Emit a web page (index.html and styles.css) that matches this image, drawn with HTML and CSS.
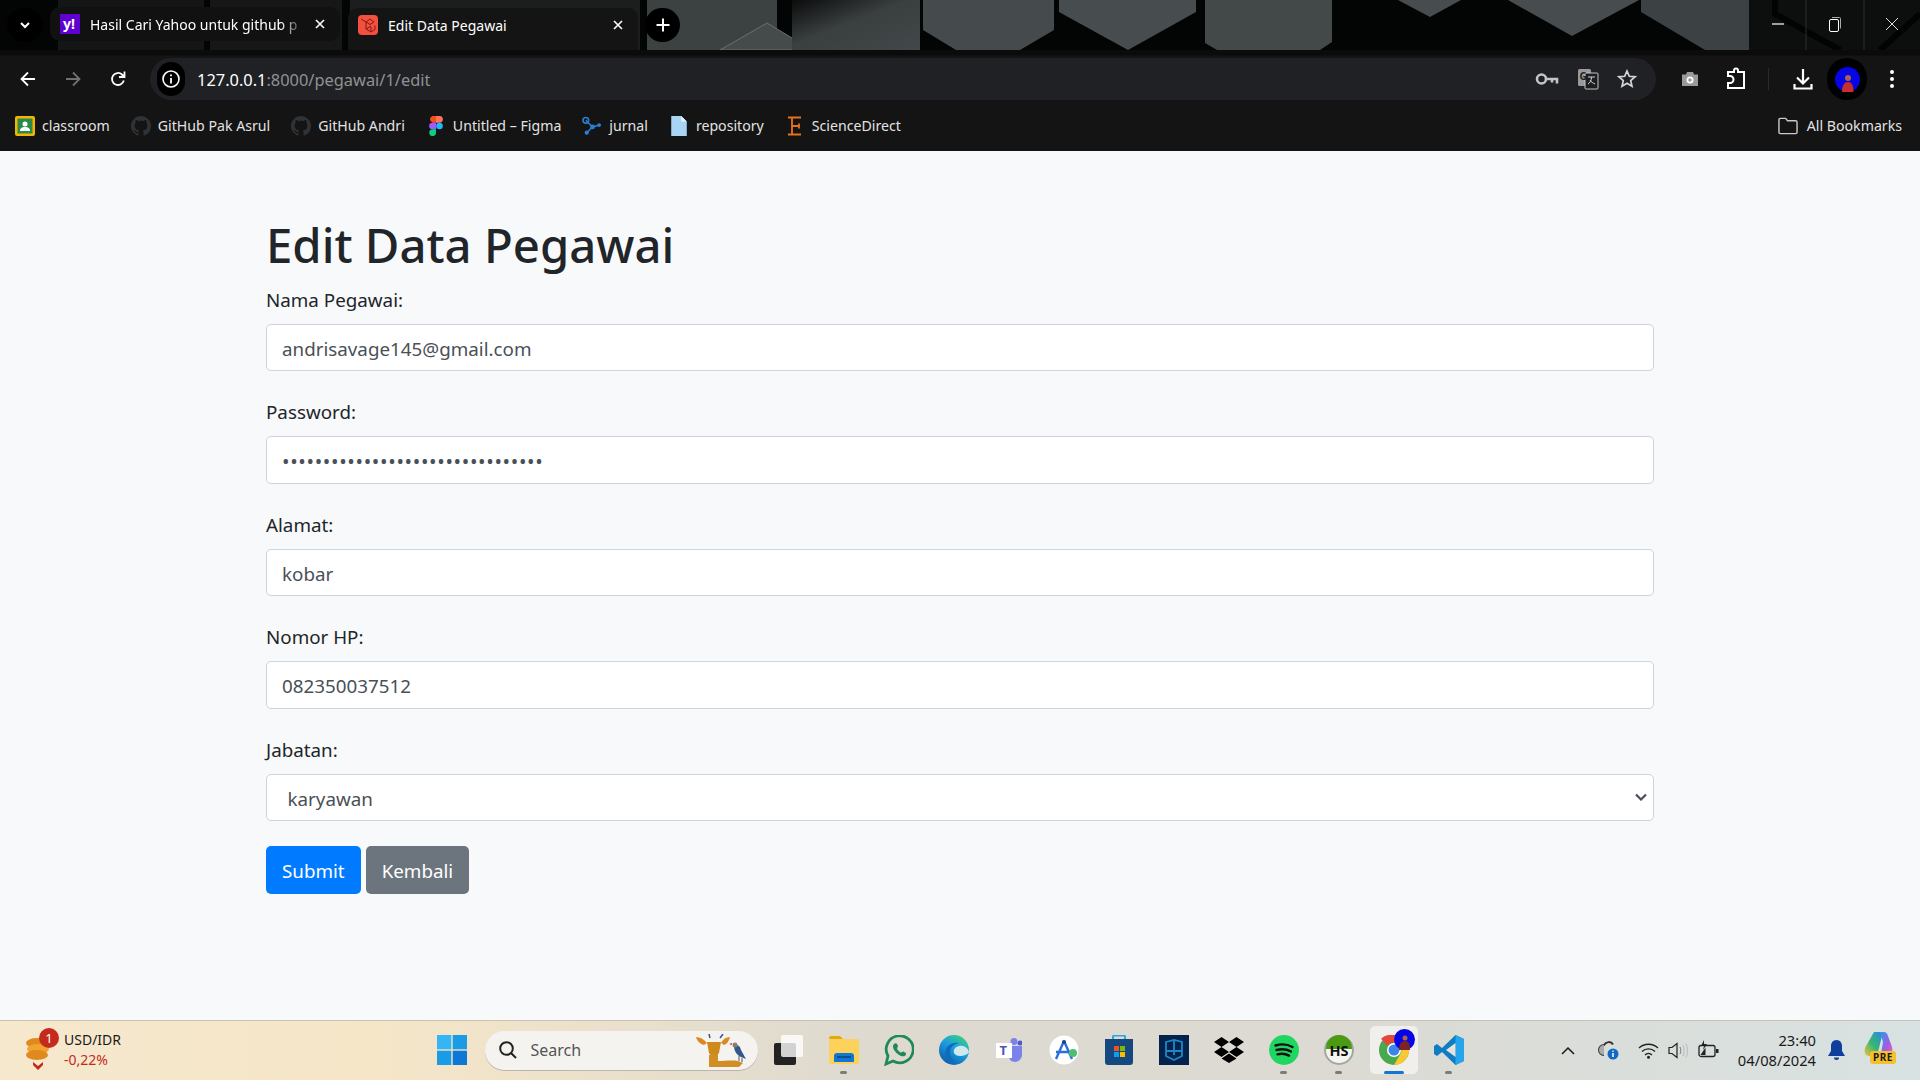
FILE: index.html
```html
<!DOCTYPE html>
<html lang="id">
<head>
    <meta charset="UTF-8">
    <title>Edit Data Pegawai</title>
    <link rel="stylesheet" href="styles.css">
</head>
<body>
    <header class="browser">
        <div class="tabstrip">
            <svg class="wallpaper" width="1920" height="50" viewBox="0 0 1920 50">
                <defs>
                    <linearGradient id="hexB" x1="0" y1="0" x2="1" y2="1">
                        <stop offset="0" stop-color="#0b0c0c"/>
                        <stop offset="0.45" stop-color="#3a3f40"/>
                        <stop offset="1" stop-color="#424849"/>
                    </linearGradient>
                </defs>
                <rect width="1920" height="50" fill="#030404"/>
                <polygon points="58,0 204,0 204,50 58,50" fill="#141515"/>
                <polygon points="210,0 342,0 342,50 210,50" fill="#161717"/>
                <polygon points="350,0 640,0 640,50 350,50" fill="#1c1d1d"/>
                <polygon points="647,0 777,0 777,50 647,50" fill="#3c4142"/>
                <polygon points="767,23 812,50 720,50" fill="#454a4a" stroke="#6a6f6f" stroke-width="1"/>
                <polygon points="792,0 920,0 920,50 792,50" fill="url(#hexB)"/>
                <polygon points="923,0 1054,0 1054,30 1020,50 956,50 923,30" fill="#454b4c"/>
                <polygon points="1059,0 1196,0 1196,12 1128,50 1059,12" fill="#474d4e"/>
                <polygon points="1205,0 1332,0 1332,42 1320,50 1217,50 1205,43" fill="#434949"/>
                <polygon points="1398,0 1461,0 1430,17" fill="#474d4e"/>
                <polygon points="1508,0 1639,0 1572,36" fill="#474d4e"/>
                <polygon points="1641,0 1749,0 1749,50 1705,50 1641,12" fill="#3c4243"/>
                <rect x="1749" width="171" height="50" fill="#0c0f0e"/>
                <polyline points="1775,0 1775,14 1840,50" fill="none" stroke="#020303" stroke-width="6"/>
                <polyline points="1920,14 1880,50" fill="none" stroke="#020303" stroke-width="6"/>
                <line x1="1806" y1="0" x2="1806" y2="50" stroke="#2a2e2d"/>
                <line x1="1864" y1="0" x2="1864" y2="50" stroke="#2a2e2d"/>
            </svg>
            <button class="tab-search">
                <svg width="14" height="14" viewBox="0 0 14 14"><path d="M3 5l4 4 4-4" fill="none" stroke="#fff" stroke-width="2"/></svg>
            </button>
            <div class="tab">
                <svg class="favicon" width="20" height="20" viewBox="0 0 20 20">
                    <rect width="20" height="20" fill="#5f01d1"/>
                    <text x="3" y="15" class="yahoo-mark">y!</text>
                </svg>
                <span class="tab-title tab-title-fade">Hasil Cari Yahoo untuk github p</span>
                <svg class="tab-close" width="12" height="12" viewBox="0 0 12 12"><path d="M2 2l8 8M10 2l-8 8" stroke="#fff" stroke-width="1.6"/></svg>
            </div>
            <div class="tab tab-active">
                <svg class="favicon" width="20" height="20" viewBox="0 0 20 20">
                    <rect width="20" height="20" rx="4" fill="#f4503f"/>
                    <path d="M3 4l5 3v7l5 3 4-2.500v-4M8 14l5-3M13 17v-5M8 7l4-3 4 3-4 2.500z" fill="none" stroke="#7d1c12" stroke-width="1"/>
                </svg>
                <span class="tab-title">Edit Data Pegawai</span>
                <svg class="tab-close" width="12" height="12" viewBox="0 0 12 12"><path d="M2 2l8 8M10 2l-8 8" stroke="#fff" stroke-width="1.6"/></svg>
            </div>
            <button class="tab-new">
                <svg width="16" height="16" viewBox="0 0 16 16"><path d="M8 1.500v13M1.500 8h13" stroke="#fff" stroke-width="2"/></svg>
            </button>
            <div class="window-controls">
                <span class="win-btn"><svg width="14" height="14" viewBox="0 0 14 14"><path d="M1 7h12" stroke="#fff" stroke-width="1.200"/></svg></span>
                <span class="win-btn"><svg width="14" height="16" viewBox="0 0 14 16"><rect x="1.500" y="3.500" width="9" height="12" rx="1.500" fill="none" stroke="#fff"/><path d="M4 1.500h7.500a1 1 0 0 1 1 1v10" fill="none" stroke="#aaa"/></svg></span>
                <span class="win-btn"><svg width="14" height="14" viewBox="0 0 14 14"><path d="M1 1l12 12M13 1L1 13" stroke="#ddd" stroke-width="1"/></svg></span>
            </div>
        </div>

        <div class="toolbar">
            <div class="nav-buttons">
                <svg width="18" height="18" viewBox="0 0 18 18"><path d="M16 9H3M9 2.500L2.500 9 9 15.500" fill="none" stroke="#fff" stroke-width="1.800"/></svg>
                <svg width="18" height="18" viewBox="0 0 18 18"><path d="M2 9h13M9 2.500L15.500 9 9 15.500" fill="none" stroke="#707070" stroke-width="1.800"/></svg>
                <svg width="18" height="18" viewBox="0 0 18 18"><path d="M14.800 10.500A6 6 0 1 1 13 4.500L15 6.500M15.500 1.500v5.500h-5.500" fill="none" stroke="#fff" stroke-width="1.800"/></svg>
            </div>
            <div class="omnibox">
                <span class="site-info">
                    <svg width="20" height="20" viewBox="0 0 20 20"><circle cx="10" cy="10" r="8" fill="none" stroke="#fff" stroke-width="1.600"/><path d="M10 9v5.500M10 5.500v1.800" stroke="#fff" stroke-width="1.800"/></svg>
                </span>
                <span class="url"><b>127.0.0.1</b>:8000/pegawai/1/edit</span>
                <span class="omni-icons">
                    <svg width="24" height="16" viewBox="0 0 24 16"><circle cx="6.500" cy="8" r="4.500" fill="none" stroke="#c4c4c4" stroke-width="2.600"/><path d="M11 8h11v4.500M17 8v3.500" fill="none" stroke="#c4c4c4" stroke-width="2.600"/></svg>
                    <svg width="22" height="22" viewBox="0 0 22 22"><rect x="1" y="1" width="13" height="17" rx="1.500" fill="#9a9a9a"/><rect x="8" y="5" width="13" height="16" rx="1" fill="#1d1e20" stroke="#c4c4c4"/><text x="2.500" y="12" class="translate-g">G</text><path d="M11 9h7M14.500 9c0 4-2 6-3.500 7M13 12c1 2 3 3 5 4" fill="none" stroke="#d5d5d5"/></svg>
                    <svg width="20" height="20" viewBox="0 0 20 20"><path d="M10 2l2.300 5.300 5.700.5-4.300 3.800 1.300 5.600L10 14.300 5 17.200l1.300-5.600L2 7.800l5.700-.5z" fill="none" stroke="#d6d6d6" stroke-width="1.700"/></svg>
                </span>
            </div>
            <div class="toolbar-actions">
                <svg class="act-camera" width="20" height="20" viewBox="0 0 20 20"><path d="M2 5.500h4L7 3h6l1 2.500h4V17H2z" fill="#9a9a9a"/><circle cx="10" cy="11" r="3.500" fill="#fff"/><circle cx="10" cy="11" r="1.800" fill="#9a9a9a"/></svg>
                <svg class="act-ext" width="22" height="24" viewBox="0 0 22 24"><path d="M3 5h6V3.500a2 2 0 0 1 4 0V5h6v16H3v-5h2a3.500 3.500 0 0 0 0-7H3z" fill="none" stroke="#fff" stroke-width="2"/></svg>
                <i class="act-divider"></i>
                <svg class="act-download" width="22" height="24" viewBox="0 0 22 24"><path d="M11 2v14M5 10.500l6 6 6-6M2.500 17v4.500h17V17" fill="none" stroke="#fff" stroke-width="2.200"/></svg>
                <span class="avatar-pill">
                    <svg width="25" height="25" viewBox="0 0 25 25"><circle cx="12.500" cy="12.500" r="12.500" fill="#0505e6"/><circle cx="13" cy="11" r="3" fill="#a8634a"/><path d="M7 25c0-7 2.500-10 6-10s5.500 3 5.500 10z" fill="#c62f2c"/></svg>
                </span>
                <svg width="6" height="20" viewBox="0 0 6 20"><circle cx="3" cy="3" r="2" fill="#fff"/><circle cx="3" cy="10" r="2" fill="#fff"/><circle cx="3" cy="17" r="2" fill="#fff"/></svg>
            </div>
        </div>

        <nav class="bookmarks">
            <a class="bookmark">
                <svg viewBox="0 0 20 20"><rect width="20" height="20" rx="2" fill="#f4b400"/><rect x="2.500" y="2.500" width="15" height="15" fill="#2a8a4a"/><circle cx="10" cy="8" r="2.500" fill="#fff"/><path d="M5 15c0-3 2-4 5-4s5 1 5 4z" fill="#fff"/></svg>
                classroom
            </a>
            <a class="bookmark">
                <svg viewBox="0 0 16 16"><path fill="#2f3237" d="M8 0C3.580 0 0 3.580 0 8c0 3.540 2.290 6.530 5.470 7.590.4.070.55-.17.55-.38 0-.19-.01-.82-.01-1.490-2.010.37-2.530-.49-2.690-.94-.09-.23-.48-.94-.82-1.130-.28-.15-.68-.52-.01-.53.63-.01 1.080.58 1.230.82.72 1.210 1.870.87 2.330.66.07-.52.28-.87.51-1.070-1.780-.2-3.640-.89-3.640-3.950 0-.87.31-1.590.82-2.150-.08-.2-.36-1.020.08-2.120 0 0 .67-.21 2.200.82.64-.18 1.320-.27 2-.27.68 0 1.360.09 2 .27 1.530-1.040 2.200-.82 2.200-.82.44 1.100.16 1.920.08 2.120.51.56.82 1.270.82 2.150 0 3.070-1.870 3.750-3.650 3.950.29.25.54.73.54 1.480 0 1.070-.01 1.930-.01 2.200 0 .21.15.46.55.38A8.013 8.013 0 0016 8c0-4.420-3.580-8-8-8z"/></svg>
                GitHub Pak Asrul
            </a>
            <a class="bookmark">
                <svg viewBox="0 0 16 16"><path fill="#2f3237" d="M8 0C3.580 0 0 3.580 0 8c0 3.540 2.290 6.530 5.470 7.590.4.070.55-.17.55-.38 0-.19-.01-.82-.01-1.490-2.010.37-2.530-.49-2.690-.94-.09-.23-.48-.94-.82-1.130-.28-.15-.68-.52-.01-.53.63-.01 1.080.58 1.230.82.72 1.210 1.870.87 2.330.66.07-.52.28-.87.51-1.070-1.780-.2-3.640-.89-3.640-3.950 0-.87.31-1.590.82-2.150-.08-.2-.36-1.020.08-2.120 0 0 .67-.21 2.200.82.64-.18 1.320-.27 2-.27.68 0 1.360.09 2 .27 1.530-1.040 2.200-.82 2.200-.82.44 1.100.16 1.920.08 2.120.51.56.82 1.270.82 2.150 0 3.070-1.870 3.750-3.650 3.950.29.25.54.73.54 1.480 0 1.070-.01 1.930-.01 2.200 0 .21.15.46.55.38A8.013 8.013 0 0016 8c0-4.420-3.580-8-8-8z"/></svg>
                GitHub Andri
            </a>
            <a class="bookmark">
                <svg viewBox="0 0 14 20"><path d="M7 0H3.500a3.500 3.500 0 0 0 0 6.700H7z" fill="#f24e1e"/><path d="M7 0h3.500a3.300 3.300 0 0 1 0 6.700H7z" fill="#ff7262"/><path d="M7 6.700H3.500a3.300 3.300 0 0 0 0 6.600H7z" fill="#a259ff"/><circle cx="10.500" cy="10" r="3.300" fill="#1abcfe"/><path d="M3.500 13.300H7V17a3.400 3.400 0 1 1-3.500-3.700z" fill="#0acf83"/></svg>
                Untitled – Figma
            </a>
            <a class="bookmark">
                <svg viewBox="0 0 21 20"><path d="M4 4l7 7M11 11l7-2M11 11l-6 6" stroke="#2d7fd6" stroke-width="1.600"/><circle cx="4" cy="4" r="3" fill="none" stroke="#2d7fd6" stroke-width="1.600"/><circle cx="11" cy="11" r="2.500" fill="#2d7fd6"/><circle cx="18" cy="9" r="2" fill="#2d7fd6"/><circle cx="5" cy="17" r="2.200" fill="#2d7fd6"/></svg>
                jurnal
            </a>
            <a class="bookmark">
                <svg viewBox="0 0 14 18"><path d="M0 0h9l5 5v13H0z" fill="#a8d4f5"/><path d="M9 0l5 5H9z" fill="#e3f2fd"/></svg>
                repository
            </a>
            <a class="bookmark">
                <svg viewBox="0 0 16 20"><path d="M1 1.500h13M1 18.500h13M5 1.500v17M5 10h7M12 7.500v5" fill="none" stroke="#e9711c" stroke-width="1.800"/></svg>
                ScienceDirect
            </a>
            <a class="bookmark all-bookmarks">
                <svg viewBox="0 0 21 18"><path d="M1 2.500a1.500 1.500 0 0 1 1.500-1.500H8l2 2.500h8.500A1.500 1.500 0 0 1 20 5v10.500a1.500 1.500 0 0 1-1.500 1.500h-16A1.500 1.500 0 0 1 1 15.500z" fill="none" stroke="#c8c8c8" stroke-width="1.500"/></svg>
                All Bookmarks
            </a>
        </nav>
    </header>

    <main class="content">
        <h1>Edit Data Pegawai</h1>
        <form>
            <div class="form-group">
                <label for="nama">Nama Pegawai:</label>
                <input id="nama" class="form-control" type="text" value="andrisavage145@gmail.com">
            </div>
            <div class="form-group">
                <label for="password">Password:</label>
                <input id="password" class="form-control form-password" type="password" value="12345678901234567890123456789012">
            </div>
            <div class="form-group">
                <label for="alamat">Alamat:</label>
                <input id="alamat" class="form-control" type="text" value="kobar">
            </div>
            <div class="form-group">
                <label for="hp">Nomor HP:</label>
                <input id="hp" class="form-control" type="text" value="082350037512">
            </div>
            <div class="form-group">
                <label for="jabatan">Jabatan:</label>
                <select id="jabatan" class="form-control form-select">
                    <option>karyawan</option>
                </select>
            </div>
            <div class="form-actions">
                <button type="button" class="btn btn-primary">Submit</button>
                <button type="button" class="btn btn-secondary">Kembali</button>
            </div>
        </form>
    </main>

    <footer class="taskbar">
        <div class="widget">
            <span class="widget-icon">
                <svg width="34" height="44" viewBox="0 0 34 44">
                    <ellipse cx="13" cy="15" rx="11" ry="5" fill="#e08a1e"/>
                    <ellipse cx="14" cy="21" rx="11" ry="5" fill="#f0a32f"/>
                    <ellipse cx="13" cy="27" rx="11" ry="5" fill="#e08a1e"/>
                    <path d="M9 34l5 4 5-4v3l-5 5-5-5z" fill="#c42b1c"/>
                </svg>
                <b class="widget-badge">1</b>
            </span>
            <span class="widget-text">
                <span>USD/IDR</span>
                <span class="widget-change">-0,22%</span>
            </span>
        </div>

        <div class="task-icons">
            <div class="tile">
                <svg width="30" height="30" viewBox="0 0 30 30"><rect width="14.300" height="14.300" fill="#35b5f3"/><rect x="15.700" width="14.300" height="14.300" fill="#1a9be6"/><rect y="15.700" width="14.300" height="14.300" fill="#1a9be6"/><rect x="15.700" y="15.700" width="14.300" height="14.300" fill="#0a78d4"/></svg>
            </div>
            <div class="search-box">
                <svg width="20" height="20" viewBox="0 0 20 20"><circle cx="8.500" cy="8.500" r="6.300" fill="none" stroke="#222" stroke-width="2"/><path d="M13 13l5 5" stroke="#222" stroke-width="2"/></svg>
                <span class="search-label">Search</span>
                <svg class="search-art" width="52" height="33" viewBox="0 0 52 33">
                    <path d="M14 4l-1-4M24 4l3-4" stroke="#34568b" stroke-width="1.500"/>
                    <path d="M0 3c4 0 8 2 11 6l-3 2C4 10 1 7 0 3zM34 3c-4 0-7 2-9 6l3 2c3-1 5-4 6-8z" fill="#d98b22"/>
                    <path d="M11 8h14l-2 11-3 4h-4l-3-4z" fill="#cf8a1d"/>
                    <path d="M13 21h9v6c6 0 14-1 20 0l5 2-4 4H13z" fill="#d08e24"/>
                    <path d="M38 12c4-2 6 0 7 4l5 9-5-2c-4-2-7-6-7-11z" fill="#34568b"/>
                    <circle cx="39" cy="11" r="2.500" fill="#8a7f6c"/>
                    <path d="M36 11l-3-1 3-1z" fill="#d33"/>
                    <path d="M43 22v5M46 24v4" stroke="#555"/>
                </svg>
            </div>
            <div class="tile tile-taskview">
                <svg width="30" height="30" viewBox="0 0 30 30"><rect y="8" width="22" height="22" rx="2" fill="#222"/><rect x="7" width="22" height="22" rx="2" fill="#fff" opacity="0.8"/></svg>
            </div>
            <div class="tile is-running">
                <svg width="30" height="28" viewBox="0 0 30 28"><path d="M0 2a2 2 0 0 1 2-2h9l3 3H0z" fill="#e8a80c"/><rect y="3" width="30" height="25" rx="2" fill="#fcd25c"/><path d="M5 26v-6a3 3 0 0 1 3-3h14a3 3 0 0 1 3 3v6z" fill="#0f78d4"/><rect x="8" y="20" width="14" height="2" fill="#0a4f95"/></svg>
            </div>
            <div class="tile">
                <svg width="30" height="31" viewBox="0 0 30 31"><path d="M2 29l2-8a13.500 13.500 0 1 1 5 5z" fill="none" stroke="#1e8a5a" stroke-width="2.800"/><path d="M10 9c1-1 2.500-1 3 0l1 2c.3.800-1 1.500-1 2.500.8 2 2.500 3.500 4 4 1 0 1.500-1.200 2.300-1l2.200 1.200c.8.500.8 1.800-.2 2.800-1.500 1.500-4 1-7-1-3-2.200-5-5-5.300-7.500-.1-1.200.3-2.200 1-3z" fill="#1e8a5a"/></svg>
            </div>
            <div class="tile">
                <svg width="30" height="30" viewBox="0 0 30 30">
                    <defs>
                        <linearGradient id="edgeGrad" x1="0.8" y1="0" x2="0.2" y2="1"><stop offset="0" stop-color="#3bd17c"/><stop offset="0.45" stop-color="#1b9de2"/><stop offset="1" stop-color="#0c59a4"/></linearGradient>
                    </defs>
                    <circle cx="15" cy="15" r="15" fill="url(#edgeGrad)"/>
                    <path d="M30 17c-1-4-5-7-10-6-4 .8-6 4-5 7 1 2 3 3 6 3 3 0 7-1 8-3-1 1-2 3-4 5l5-6z" fill="#cfe8ee"/>
                    <path d="M7 23C4 13 11 6 20 8c-5 1-9 4-9 10 0 3 2 7 6 9-4 0-8-1-10-4z" fill="#0f6cbd"/>
                </svg>
            </div>
            <div class="tile">
                <svg width="26" height="24" viewBox="0 0 26 24"><circle cx="18" cy="3.500" r="3.500" fill="#7b83eb"/><circle cx="24" cy="5" r="2.500" fill="#5059c9"/><path d="M13 8h13v9c0 3-3 7-7 7s-6-3-6-6z" fill="#7b83eb"/><rect y="5" width="16" height="15" fill="#fff"/><text x="3.500" y="17" class="teams-t">T</text></svg>
            </div>
            <div class="tile">
                <svg width="30" height="30" viewBox="0 0 30 30"><circle cx="15" cy="15" r="14.500" fill="#fff"/><path d="M15 6L7 24M15 6l8 18M7 17h16" fill="none" stroke="#2a6fe0" stroke-width="2.400"/><circle cx="15" cy="7" r="2" fill="#1c3f94"/><circle cx="24" cy="18" r="4" fill="#4cc070"/></svg>
            </div>
            <div class="tile">
                <svg width="28" height="30" viewBox="0 0 28 30"><path d="M8 5V2a1.500 1.500 0 0 1 1.500-1.500h9A1.500 1.500 0 0 1 20 2v3" fill="none" stroke="#29a8e0" stroke-width="2"/><path d="M0 4h28v23a3 3 0 0 1-3 3H3a3 3 0 0 1-3-3z" fill="#15487f"/><rect x="9" y="11" width="5" height="5" fill="#f25022"/><rect x="15" y="11" width="5" height="5" fill="#7fba00"/><rect x="9" y="17" width="5" height="5" fill="#00a4ef"/><rect x="15" y="17" width="5" height="5" fill="#ffb900"/></svg>
            </div>
            <div class="tile">
                <svg width="30" height="30" viewBox="0 0 30 30"><rect width="30" height="30" fill="#03224c"/><path d="M7 7l8-2 8 2v14l-8 4-8-4zM15 5v15M7 16h16" fill="none" stroke="#1e88c7" stroke-width="1.800"/></svg>
            </div>
            <div class="tile">
                <svg width="30" height="26" viewBox="0 0 30 26"><path d="M7.500 0L15 5 7.500 10 0 5zM22.500 0L30 5l-7.500 5L15 5zM7.500 10L15 15l-7.500 5L0 15zM22.500 10L30 15l-7.500 5L15 15zM15 16.500l7.500 5L15 26l-7.500-4.500z" fill="#000"/></svg>
            </div>
            <div class="tile is-running">
                <svg width="30" height="30" viewBox="0 0 30 30"><circle cx="15" cy="15" r="15" fill="#1ed760"/><path d="M6.500 10.500c6-1.800 12-1.300 17 1.500M7.500 15c5-1.400 10-1 14.500 1.500M8.500 19.300c4-1 8-.7 11.500 1.300" fill="none" stroke="#111" stroke-width="2.400" stroke-linecap="round"/></svg>
            </div>
            <div class="tile is-running">
                <svg width="30" height="30" viewBox="0 0 30 30"><circle cx="15" cy="15" r="14" fill="#f4f4f0" stroke="#a3a89e" stroke-width="2"/><path d="M2 13a13 13 0 0 1 26 0v1H2z" fill="#4a9a12"/><text x="15" y="20.500" text-anchor="middle" class="hs-mark">HS</text></svg>
            </div>
            <div class="tile tile-active">
                <svg class="chrome-logo" width="30" height="30" viewBox="0 0 30 30"><circle cx="15" cy="15" r="15" fill="#4aa84e"/><path d="M15 0a15 15 0 0 1 13 7.500H15A7.500 7.500 0 0 0 8.500 11L2 3.800A15 15 0 0 1 15 0z" fill="#e5483a"/><path d="M28 7.500A15 15 0 0 1 15 30l6.500-11.300A7.500 7.500 0 0 0 22.500 15c0-2.800-1.500-5.800-3.500-7.500z" fill="#f8c934"/><circle cx="15" cy="15" r="7" fill="#fff"/><circle cx="15" cy="15" r="5.500" fill="#3a84ea"/></svg>
                <svg class="chrome-avatar" width="21" height="21" viewBox="0 0 21 21"><circle cx="10.500" cy="10.500" r="10.500" fill="#0505e6"/><circle cx="11" cy="9" r="2.500" fill="#a8634a"/><path d="M5 21c0-6 2-9 6-9s5 3 5 9z" fill="#7b2326"/></svg>
            </div>
            <div class="tile is-running">
                <svg width="30" height="30" viewBox="0 0 30 30"><path d="M21.500 0L30 4v22l-8.500 4L8 17 3 21l-3-2v-8l3-2 5 4z" fill="#0f7cc4"/><path d="M21.500 0L30 4v22l-8.500 4z" fill="#27a5ec"/><path d="M21.500 8v14L12 15z" fill="#e6e3dc"/></svg>
            </div>
        </div>

        <div class="tray">
            <div class="tray-icons">
                <svg class="tray-caret" width="14" height="9" viewBox="0 0 14 9"><path d="M1 8l6-6 6 6" fill="none" stroke="#1a1a1a" stroke-width="1.500"/></svg>
                <svg class="tray-cloud" width="21" height="20" viewBox="0 0 21 20"><path d="M6 15a5 5 0 0 1 0-10c2-3.500 7-4 9-.5" fill="none" stroke="#333" stroke-width="2"/><path d="M6 15a5 5 0 0 1 0-10" fill="#aaa"/><circle cx="15" cy="14" r="5.500" fill="#1269c4"/><path d="M15 13v4M15 10.500v1.200" stroke="#fff" stroke-width="1.500"/></svg>
                <svg class="tray-wifi" width="21" height="17" viewBox="0 0 21 17"><path d="M1 6c5-5 14-5 19 0M4 9.500c3.500-3.500 9.500-3.500 13 0M7 13c2-2 5-2 7 0" fill="none" stroke="#222" stroke-width="1.300"/><circle cx="10.500" cy="15.300" r="1.500" fill="#222"/></svg>
                <svg class="tray-volume" width="21" height="17" viewBox="0 0 21 17"><path d="M1 5.500h3L9 1.500v14l-5-4H1z" fill="none" stroke="#222" stroke-width="1.200"/><path d="M12 5c1 2 1 5 0 7" fill="none" stroke="#777"/><path d="M15 3c1.500 3.500 1.500 7.500 0 11M18 1.500c2 4 2 10 0 14" fill="none" stroke="#bbb"/></svg>
                <svg class="tray-battery" width="21" height="20" viewBox="0 0 21 20"><rect x="1" y="5.500" width="16" height="11" rx="2" fill="none" stroke="#222" stroke-width="1.300"/><rect x="18" y="9" width="2.500" height="4" fill="#222"/><path d="M2.500 15l5-7.500v7.500z" fill="#222"/><path d="M6 0L3 6h3l-1 4 4-6H6z" fill="#222"/></svg>
            </div>
            <div class="clock">
                <span>23:40</span>
                <span>04/08/2024</span>
            </div>
            <svg class="tray-bell" width="17" height="20" viewBox="0 0 17 20"><path d="M8.500 0c3.500 0 5.500 2.800 5.500 6v5l3 5H0l3-5V6c0-3.200 2-6 5.500-6z" fill="#0f3e9c"/><path d="M6 17.500h5a2.500 2.500 0 0 1-5 0z" fill="#0f3e9c"/></svg>
            <span class="copilot">
                <svg width="29" height="25" viewBox="0 0 29 25">
                    <defs>
                        <linearGradient id="copA" x1="0" y1="1" x2="1" y2="0"><stop offset="0" stop-color="#f5c23c"/><stop offset="0.45" stop-color="#37b86e"/><stop offset="1" stop-color="#2489e8"/></linearGradient>
                        <linearGradient id="copB" x1="0" y1="0" x2="1" y2="1"><stop offset="0" stop-color="#2a9df0"/><stop offset="0.6" stop-color="#a05de0"/><stop offset="1" stop-color="#e860c8"/></linearGradient>
                    </defs>
                    <path d="M10 0h9l-6 24H5C1 24 0 20 1 16z" fill="url(#copA)"/>
                    <path d="M16 0h4c2 0 3 1 4 4l4 11c1 4 0 7-4 7h-7l2-12z" fill="url(#copB)"/>
                </svg>
                <b class="copilot-pre">PRE</b>
            </span>
        </div>
    </footer>
</body>
</html>
```

FILE: styles.css
```css
html, body {
    margin: 0;
    padding: 0;
    height: 100%;
    overflow: hidden;
}
body {
    display: flex;
    flex-direction: column;
    height: 1080px;
    background: #f8f9fa;
    font-family: "Noto Sans", "Open Sans", sans-serif;
}

/* browser chrome */
.browser {
    color: #fff;
    background: #141414;
    font-size: 14px;
}
.tabstrip {
    position: relative;
    display: flex;
    height: 50px;
}
.wallpaper {
    position: absolute;
    top: 0;
    left: 0;
}
.tab-search, .tab-new {
    position: relative;
    display: flex;
    align-items: center;
    justify-content: center;
    height: 34px;
    margin-top: 8px;
    padding: 0;
    background: #000;
    border: none;
    border-radius: 17px;
}
.tab-search {
    width: 36px;
    margin-left: 7px;
}
.tab-new {
    width: 35px;
    margin-left: 7px;
}
.tab {
    position: relative;
    display: flex;
    align-items: center;
    width: 290px;
    height: 34px;
    box-sizing: border-box;
    margin: 7px 0 0 7px;
    padding: 0 14px 0 10px;
    background: #111;
    border-radius: 10px;
}
.tab-active {
    height: 42px;
    margin: 8px 0 0 8px;
    padding-bottom: 8px;
    background: #141414;
    border-radius: 10px 10px 0 0;
}
.favicon {
    flex: none;
    margin-right: 10px;
}
.tab-title {
    flex: 1;
    overflow: hidden;
    white-space: nowrap;
}
.tab-title-fade {
    -webkit-mask-image: linear-gradient(to right, #000 88%, transparent 100%);
    mask-image: linear-gradient(to right, #000 88%, transparent 100%);
}
.tab-close {
    flex: none;
    margin-left: 8px;
}
.yahoo-mark {
    font: 700 14px "Noto Sans", sans-serif;
    fill: #fff;
}
.window-controls {
    position: relative;
    display: flex;
    margin-left: auto;
}
.win-btn {
    display: flex;
    align-items: center;
    justify-content: center;
    width: 57px;
    height: 48px;
}

.toolbar {
    display: flex;
    align-items: center;
    height: 50px;
    box-sizing: border-box;
    padding-top: 8px;
    background: linear-gradient(#0b0b0b 0, #0b0b0b 5px, #141414 6px);
}
.nav-buttons {
    display: flex;
    align-items: center;
    gap: 27px;
    width: 150px;
    box-sizing: border-box;
    padding-left: 19px;
}
.omnibox {
    display: flex;
    align-items: center;
    width: 1506px;
    height: 42px;
    box-sizing: border-box;
    padding: 0 19px 0 7px;
    background: #202124;
    border-radius: 21px;
}
.site-info {
    display: flex;
    align-items: center;
    justify-content: center;
    width: 28px;
    height: 34px;
    margin-right: 12px;
    background: #000;
    border-radius: 14px;
}
.url {
    flex: 1;
    color: #8f9194;
    font-size: 16.400px;
}
.url b {
    color: #fff;
    font-weight: 400;
}
.omni-icons {
    display: flex;
    align-items: center;
    gap: 18px;
}
.toolbar-actions {
    display: flex;
    align-items: center;
    flex: 1;
    padding-left: 24px;
}
.act-ext {
    margin-left: 25px;
}
.act-divider {
    width: 1px;
    height: 22px;
    margin-left: 21px;
    background: #2a2a2a;
}
.act-download {
    margin-left: 23px;
}
.avatar-pill {
    display: flex;
    align-items: center;
    justify-content: center;
    width: 40px;
    height: 42px;
    margin: 0 22px 0 13px;
    background: #000;
    border-radius: 20px;
}
.translate-g {
    font: 700 10px "Noto Sans", sans-serif;
    fill: #1d1e20;
}

.bookmarks {
    display: flex;
    align-items: center;
    height: 51px;
    box-sizing: border-box;
    padding: 0 18px 0 15px;
    color: #e3e3e3;
    font-size: 14.150px;
}
.bookmark {
    display: flex;
    align-items: center;
    gap: 7px;
    margin-right: 21px;
}
.bookmark svg {
    width: 20px;
    height: 20px;
}
.all-bookmarks {
    gap: 9px;
    margin: 0 0 0 auto;
}

/* page */
.content {
    flex: 1;
    box-sizing: border-box;
    padding: 62.500px 266px 0;
    color: #212529;
    font-size: 18.800px;
    line-height: 30px;
}
h1 {
    margin: 0 0 9px;
    padding-top: 1px;
    font-size: 47.300px;
    font-weight: 500;
    line-height: 60px;
}
.form-group {
    margin-bottom: 25px;
}
label {
    display: block;
    margin-bottom: 9px;
    padding-top: 1px;
}
.form-control {
    display: block;
    width: 100%;
    height: 47.500px;
    box-sizing: border-box;
    padding: 9px 15px 6px;
    color: #495057;
    background: #fff;
    border: 1.250px solid #ced4da;
    border-radius: 5px;
    font: inherit;
}
.form-password {
    font-size: 20px;
    letter-spacing: 0.65px;
}
.form-select {
    padding-left: 20.500px;
    appearance: none;
    -webkit-appearance: none;
    background: #fff url("data:image/svg+xml,%3Csvg xmlns='http://www.w3.org/2000/svg' width='12' height='8'%3E%3Cpath d='M1 1.500l5 5 5-5' fill='none' stroke='%23495057' stroke-width='2.200'/%3E%3C/svg%3E") no-repeat right 6px center;
}
.form-actions {
    display: flex;
    gap: 5px;
}
.btn {
    height: 47.500px;
    padding: 2px 16px 0;
    color: #fff;
    border: none;
    border-radius: 5px;
    font: inherit;
}
.btn-primary {
    background: #007bff;
}
.btn-secondary {
    background: #6c757d;
}

/* windows taskbar */
.taskbar {
    display: flex;
    align-items: center;
    height: 60px;
    box-sizing: border-box;
    padding-bottom: 1px;
    color: #1a1a1a;
    background: linear-gradient(to right, #f6e8cd 0, #f5e6c8 20%, #dedad0 45%, #dcdad3 70%, #d8e2e2 100%);
    border-top: 1px solid #c6c2b6;
    font-size: 14px;
}
.widget {
    display: flex;
    align-items: center;
    width: 424.500px;
    box-sizing: border-box;
    padding-left: 24px;
}
.widget-icon {
    position: relative;
    display: block;
    width: 40px;
    height: 44px;
}
.widget-badge {
    position: absolute;
    top: 0;
    left: 15px;
    width: 20px;
    height: 20px;
    color: #fff;
    background: #c42b1c;
    border-radius: 50%;
    font-size: 13px;
    font-weight: 400;
    line-height: 20px;
    text-align: center;
}
.widget-text {
    display: flex;
    flex-direction: column;
    line-height: 20px;
}
.widget-change {
    color: #c42b1c;
}
.task-icons {
    display: flex;
    align-items: center;
}
.tile {
    position: relative;
    display: flex;
    align-items: center;
    justify-content: center;
    width: 55px;
    height: 48px;
}
.is-running::after {
    content: "";
    position: absolute;
    bottom: 0;
    left: 24px;
    width: 7px;
    height: 3px;
    background: #7b7b7b;
    border-radius: 2px;
}
.tile-taskview {
    margin-left: 3.500px;
}
.tile-active {
    width: 48px;
    margin: 0 3.500px;
    background: #f0efec;
    border-radius: 5px;
}
.tile-active::after {
    content: "";
    position: absolute;
    bottom: 0;
    left: 14px;
    width: 20px;
    height: 3px;
    background: #0f78d4;
    border-radius: 2px;
}
.chrome-avatar {
    position: absolute;
    top: 3px;
    right: 3px;
}
.search-box {
    display: flex;
    align-items: center;
    width: 273px;
    height: 39px;
    box-sizing: border-box;
    margin-left: 5px;
    padding: 0 10px 0 13px;
    background: #f5f3ef;
    border-radius: 20px;
    box-shadow: 0 1px 0 #b9b6ae;
}
.search-label {
    flex: 1;
    margin-left: 13px;
    color: #555;
    font-size: 16px;
}
.teams-t {
    font: 700 13px "Noto Sans", sans-serif;
    fill: #4b53bc;
}
.hs-mark {
    font: 700 14.500px "Noto Sans", sans-serif;
    fill: #111;
}
.tray {
    display: flex;
    align-items: center;
    flex: 1;
    padding-left: 85px;
}
.tray-icons {
    display: flex;
    align-items: center;
}
.tray-cloud {
    margin-left: 23px;
}
.tray-wifi {
    margin-left: 19px;
}
.tray-volume {
    margin-left: 9px;
}
.tray-battery {
    margin-left: 9px;
}
.clock {
    display: flex;
    flex-direction: column;
    align-items: flex-end;
    width: 97px;
    font-size: 14.700px;
    line-height: 20px;
}
.tray-bell {
    margin-left: 12px;
}
.copilot {
    position: relative;
    display: block;
    width: 30px;
    height: 36px;
    margin-left: 19px;
}
.copilot-pre {
    position: absolute;
    top: 19px;
    left: 6px;
    padding: 0 3px;
    color: #1a1a1a;
    background: #f6c02c;
    border-radius: 3px;
    font-size: 10px;
    font-weight: 700;
    letter-spacing: 0.5px;
    line-height: 13px;
}
```
